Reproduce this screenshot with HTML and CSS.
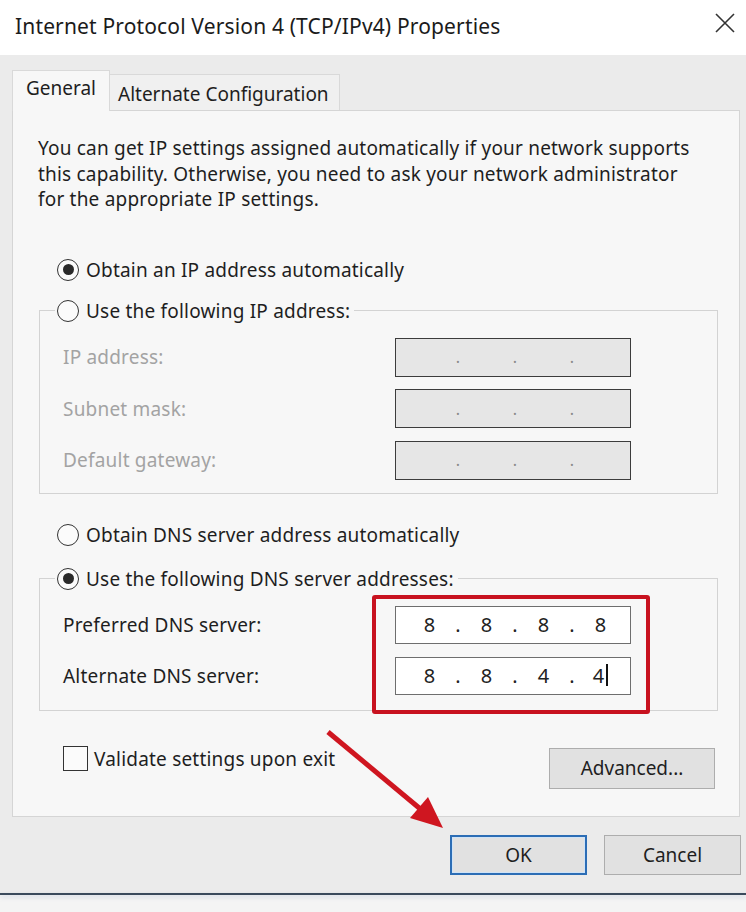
FILE: index.html
```html
<!DOCTYPE html>
<html lang="en">
  <head>
    <meta charset="UTF-8" />
    <meta name="viewport" content="width=device-width, initial-scale=1.0" />
    <title>Internet Protocol Version 4 (TCP/IPv4) Properties</title>
    <link rel="stylesheet" href="styles.css">
  </head>
  <body>
    <div class="window">
      <div class="titlebar">
        <span class="title">Internet Protocol Version 4 (TCP/IPv4) Properties</span>
        <svg class="close" width="20" height="20" viewBox="0 0 20 20">
          <path d="M1 1L19 19M19 1L1 19" />
        </svg>
      </div>

      <div class="client">
        <div class="tabs">
          <div class="tab active">General</div>
          <div class="tab">Alternate Configuration</div>
        </div>

        <div class="panel">
          <p class="intro">
            You can get IP settings assigned automatically if your network supports<br />
            this capability. Otherwise, you need to ask your network administrator<br />
            for the appropriate IP settings.
          </p>

          <div class="option first">
            <span class="radio checked"></span>Obtain an IP address automatically
          </div>

          <fieldset class="group">
            <legend>
              <div class="option"><span class="radio"></span>Use the following IP address:</div>
            </legend>
            <div class="field disabled">
              <span class="label">IP address:</span>
              <div class="ip">
                <span class="oct"></span><span class="dot">.</span>
                <span class="oct"></span><span class="dot">.</span>
                <span class="oct"></span><span class="dot">.</span>
                <span class="oct"></span>
              </div>
            </div>
            <div class="field disabled">
              <span class="label">Subnet mask:</span>
              <div class="ip">
                <span class="oct"></span><span class="dot">.</span>
                <span class="oct"></span><span class="dot">.</span>
                <span class="oct"></span><span class="dot">.</span>
                <span class="oct"></span>
              </div>
            </div>
            <div class="field disabled">
              <span class="label">Default gateway:</span>
              <div class="ip">
                <span class="oct"></span><span class="dot">.</span>
                <span class="oct"></span><span class="dot">.</span>
                <span class="oct"></span><span class="dot">.</span>
                <span class="oct"></span>
              </div>
            </div>
          </fieldset>

          <div class="option dns-auto">
            <span class="radio"></span>Obtain DNS server address automatically
          </div>

          <fieldset class="group dns">
            <legend>
              <div class="option"><span class="radio checked"></span>Use the following DNS server addresses:</div>
            </legend>
            <div class="field">
              <span class="label">Preferred DNS server:</span>
              <div class="ip">
                <span class="oct">8</span><span class="dot">.</span>
                <span class="oct">8</span><span class="dot">.</span>
                <span class="oct">8</span><span class="dot">.</span>
                <span class="oct">8</span>
              </div>
            </div>
            <div class="field">
              <span class="label">Alternate DNS server:</span>
              <div class="ip">
                <span class="oct">8</span><span class="dot">.</span>
                <span class="oct">8</span><span class="dot">.</span>
                <span class="oct">4</span><span class="dot">.</span>
                <span class="oct">4<span class="caret"></span></span>
              </div>
            </div>
          </fieldset>

          <div class="footer">
            <div class="option check-row">
              <span class="checkbox"></span>Validate settings upon exit
            </div>
            <button class="btn advanced">Advanced...</button>
          </div>
        </div>

        <div class="buttons">
          <button class="btn default">OK</button>
          <button class="btn">Cancel</button>
        </div>
      </div>
      <div class="frame-bottom"></div>

      <!-- annotations drawn over the dialog -->
      <div class="highlight"></div>
      <svg class="arrow" width="746" height="912" viewBox="0 0 746 912">
        <line x1="328" y1="732" x2="424" y2="812" />
        <polygon points="443,828 410,818 428,797" />
      </svg>
    </div>
  </body>
</html>
```

FILE: styles.css
```css
body {
  margin: 0;
  background-color: #f4f4f4;
  font-family: "Noto Sans", "Open Sans", sans-serif;
  color: #1e1e1e;
}
.window {
  position: relative;
  width: 746px;
  height: 912px;
  overflow: hidden;
}
.titlebar {
  height: 55px;
  background: #fff;
  display: flex;
  justify-content: space-between;
  padding: 0 11px 0 15px;
  box-sizing: border-box;
}
.title {
  font-size: 21px;
  letter-spacing: 0.15px;
  line-height: 53px;
  color: #1b1b1b;
}
.close {
  margin-top: 13px;
}
.close path {
  stroke: #333;
  stroke-width: 1.6;
  fill: none;
}
.client {
  height: 838px;
  background: #ebebeb;
  padding-top: 15px;
  box-sizing: border-box;
}
.tabs {
  display: flex;
  align-items: flex-end;
  height: 40px;
  margin-left: 12px;
}
.tab {
  box-sizing: border-box;
  height: 36px;
  width: 230px;
  padding: 7px 0 0 8px;
  font-size: 19px;
  line-height: 24px;
  background: #f0f0f0;
  border: 1px solid #d9d9d9;
  border-bottom: none;
  border-left: none;
}
.tab.active {
  position: relative;
  z-index: 1;
  width: 98px;
  height: 41px;
  margin-bottom: -1px;
  padding: 5px 0 0 0;
  text-align: center;
  background: #f7f7f7;
  border-left: 1px solid #d9d9d9;
}
.panel {
  box-sizing: border-box;
  margin-left: 12px;
  width: 728px;
  height: 707px;
  padding: 25px 21px 0 25px;
  background: #f7f7f7;
  border: 1px solid #d5d5d5;
}
.intro {
  margin: 0;
  font-size: 19px;
  letter-spacing: 0.2px;
  line-height: 25.5px;
}
.option {
  display: flex;
  align-items: center;
  height: 26px;
  font-size: 19px;
  letter-spacing: 0.2px;
  line-height: 26px;
  white-space: nowrap;
}
.option.first {
  margin: 44px 0 0 19px;
}
.option.dns-auto {
  margin: 28px 0 0 19px;
}
.radio {
  box-sizing: border-box;
  width: 22px;
  height: 22px;
  margin-right: 7px;
  border: 1.5px solid #333;
  border-radius: 50%;
  background: #fbfbfb;
  display: flex;
  align-items: center;
  justify-content: center;
}
.radio.checked::after {
  content: "";
  width: 11px;
  height: 11px;
  border-radius: 50%;
  background: #2a2a2a;
}
.group {
  margin: 15px 0 0 1px;
  padding: 14px 0 13px 15px;
  border: 1px solid #d3d3d3;
  min-width: 0;
}
.group.dns {
  margin-top: 18px;
  padding-bottom: 15px;
}
.group legend {
  padding: 0 4px 0 2px;
}
.field {
  display: grid;
  grid-template-columns: 340px 236px;
  align-items: center;
  height: 39px;
  margin-bottom: 12.5px;
}
.field:last-child {
  margin-bottom: 0;
}
.group.dns .field {
  height: 38px;
  margin-bottom: 13px;
}
.group.dns .field:last-child {
  margin-bottom: 0;
}
.label {
  padding-left: 8px;
  font-size: 19px;
  letter-spacing: 0.2px;
}
.disabled .label {
  color: #a3a3a3;
}
.ip {
  box-sizing: border-box;
  height: 100%;
  display: flex;
  align-items: center;
  padding-left: 11px;
  background: #fff;
  border: 1px solid #6e6e6e;
  font-size: 20px;
  color: #222;
}
.disabled .ip {
  background: #e6e6e6;
  border: 1.5px solid #3c3c3c;
  font-size: 16px;
  color: #8a8a8a;
}
.oct {
  width: 45px;
  text-align: center;
}
.dot {
  width: 12px;
  text-align: center;
}
.caret {
  display: inline-block;
  width: 2px;
  height: 22px;
  margin-left: 2px;
  vertical-align: -3px;
  background: #111;
}
.footer {
  display: flex;
  justify-content: space-between;
  align-items: flex-start;
  margin-top: 35px;
}
.check-row {
  margin-left: 25px;
}
.checkbox {
  box-sizing: border-box;
  width: 25px;
  height: 25px;
  margin-right: 6px;
  border: 1.5px solid #333;
  background: #fbfbfb;
}
.btn {
  box-sizing: border-box;
  height: 40px;
  width: 137px;
  background: #e1e1e1;
  border: 1px solid #adadad;
  font-family: "Noto Sans", "Open Sans", sans-serif;
  font-size: 19px;
  color: #1e1e1e;
  padding: 0;
}
.btn.advanced {
  width: 166px;
  height: 41px;
  margin: 2px 3px 0 0;
}
.btn.default {
  border: 2px solid #2c6db5;
  box-shadow: inset 0 0 0 1px #cfe3f7;
}
.buttons {
  display: flex;
  justify-content: flex-end;
  gap: 17px;
  margin: 18px 5px 0 0;
}
.frame-bottom {
  height: 2px;
  background: #3a4a5c;
  box-shadow: 0 2px 4px rgba(120, 150, 190, 0.35);
}
.highlight {
  position: absolute;
  left: 372px;
  top: 595px;
  width: 278px;
  height: 119px;
  box-sizing: border-box;
  border: 4px solid #c8121f;
  border-radius: 3px;
}
.arrow {
  position: absolute;
  left: 0;
  top: 0;
  pointer-events: none;
}
.arrow line {
  stroke: #cf1620;
  stroke-width: 5;
}
.arrow polygon {
  fill: #cf1620;
}
```
